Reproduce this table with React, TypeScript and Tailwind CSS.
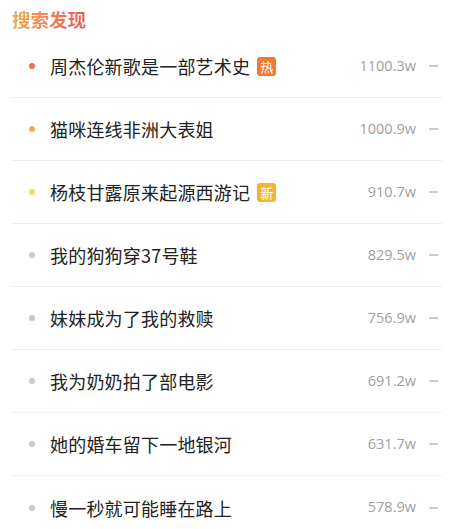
import React from "react";

type Item = { title: string; count: string; dot: string; badge?: "hot" | "new" };

const items: Item[] = [
  { title: "周杰伦新歌是一部艺术史", count: "1100.3w", dot: "bg-[#f26a5a]", badge: "hot" },
  { title: "猫咪连线非洲大表姐", count: "1000.9w", dot: "bg-[#f0a858]" },
  { title: "杨枝甘露原来起源西游记", count: "910.7w", dot: "bg-[#f8d858]", badge: "new" },
  { title: "我的狗狗穿37号鞋", count: "829.5w", dot: "bg-[#c8c8c8]" },
  { title: "妹妹成为了我的救赎", count: "756.9w", dot: "bg-[#c8c8c8]" },
  { title: "我为奶奶拍了部电影", count: "691.2w", dot: "bg-[#c8c8c8]" },
  { title: "她的婚车留下一地银河", count: "631.7w", dot: "bg-[#c8c8c8]" },
  { title: "慢一秒就可能睡在路上", count: "578.9w", dot: "bg-[#c8c8c8]" },
];

export default function App() {
  return (
    <div
      className="w-[456px] h-[529px] bg-white overflow-hidden"
      style={{ fontFamily: '"Noto Sans CJK SC", "Noto Sans", sans-serif' }}
    >
      <div className="h-[35px] flex items-center pl-[12px] pt-[4px]">
        <span className="text-[18.5px] font-bold leading-none bg-gradient-to-r from-[#f2a84e] to-[#e8585a] bg-clip-text text-transparent">
          搜索发现
        </span>
      </div>
      <div className="pl-[12px] pr-[14px]">
        {items.map((it, i) => (
          <div
            key={i}
            className={`h-[63px] flex items-center ${i < items.length - 1 ? "border-b border-[#efefef]" : ""}`}
          >
            <div className="w-[38px] flex justify-center pl-[2px]">
              <span className={`w-[6px] h-[6px] rounded-full ${it.dot}`} />
            </div>
            <span className="text-[18px] text-[#222] leading-none tracking-[0.2px]">{it.title}</span>
            {it.badge === "hot" && (
              <span className="ml-[7px] w-[19px] h-[19px] rounded-[3px] bg-[#f07a32] text-white text-[13px] leading-none flex items-center justify-center">
                热
              </span>
            )}
            {it.badge === "new" && (
              <span className="ml-[7px] w-[19px] h-[19px] rounded-[3px] bg-[#f3b436] text-white text-[13px] leading-none flex items-center justify-center">
                新
              </span>
            )}
            <span
              className="ml-auto text-[14.5px] text-[#a0a0a0] leading-none"
              style={{ fontFamily: '"Open Sans", "Noto Sans", sans-serif' }}
            >
              {it.count}
            </span>
            <span className="ml-[13px] mr-[4px] w-[9px] h-[2px] bg-[#cccccc]" />
          </div>
        ))}
      </div>
    </div>
  );
}
